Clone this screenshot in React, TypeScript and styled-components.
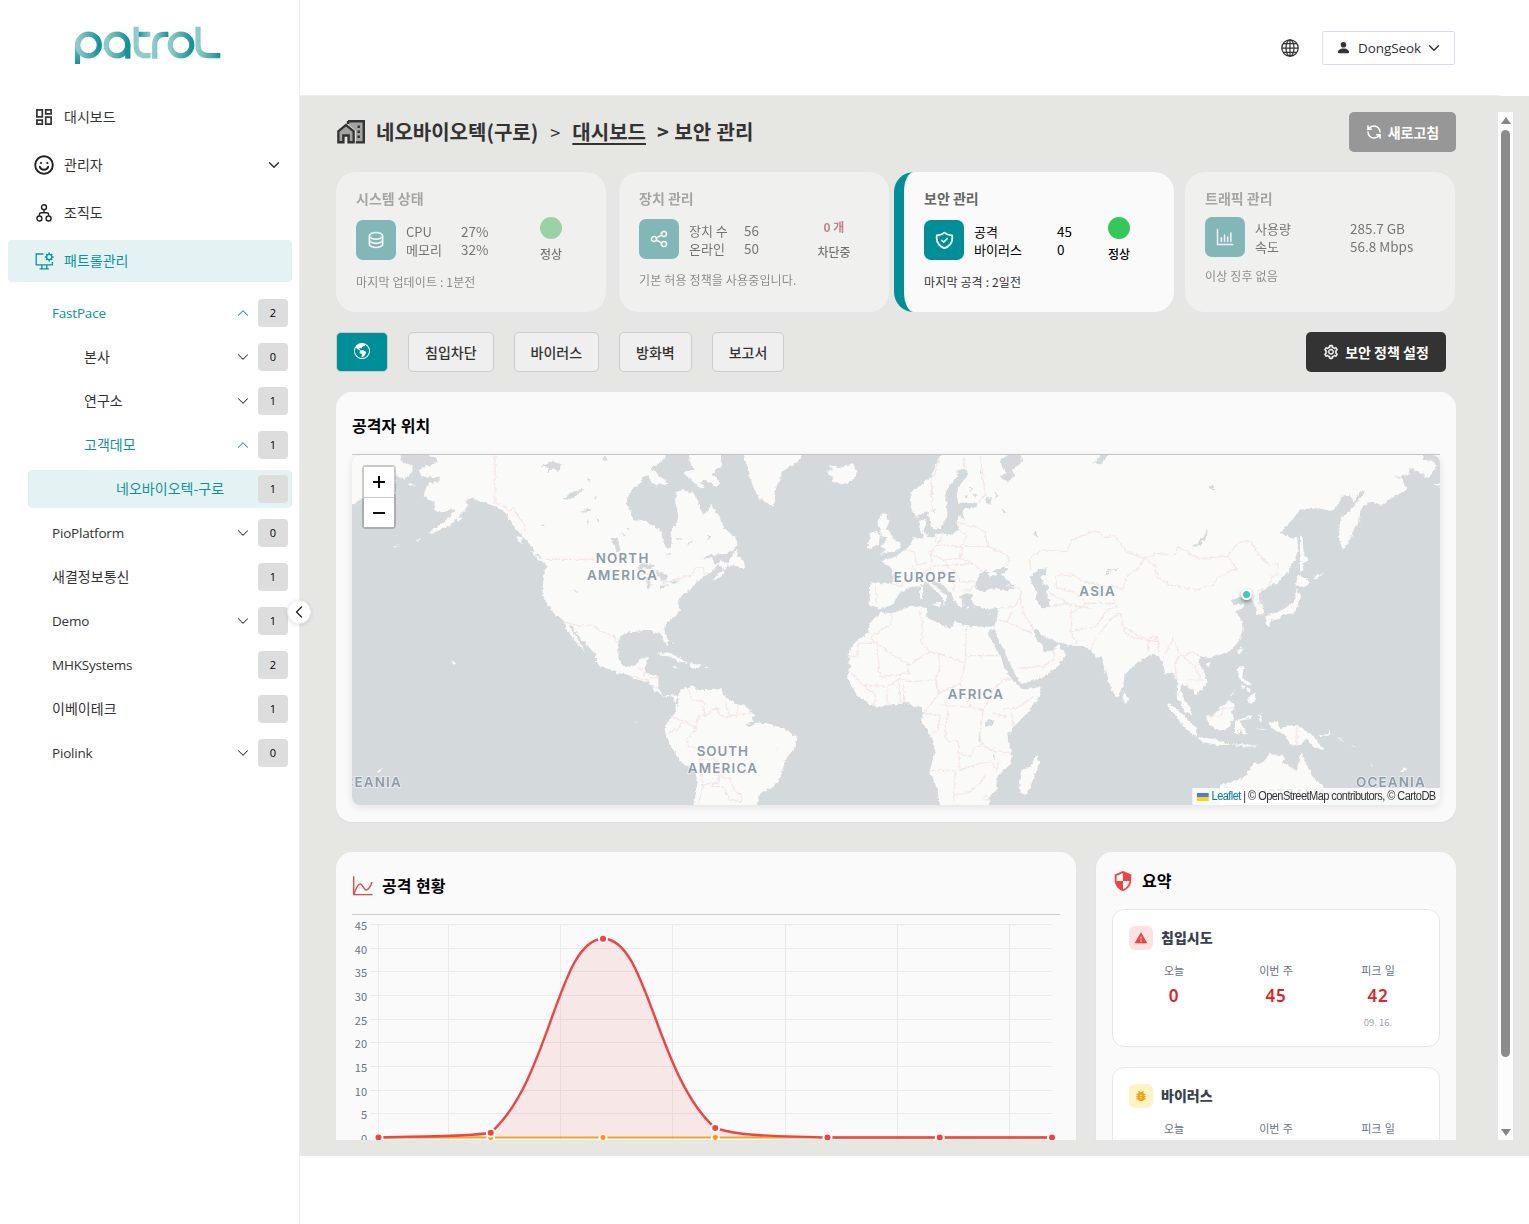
import React from "react";
import styled, { createGlobalStyle, css } from "styled-components";
import { MdSecurity, MdWarning, MdBugReport } from "react-icons/md";
import { BsPersonFill, BsGlobeAmericas } from "react-icons/bs";
import { AiOutlineSetting } from "react-icons/ai";
import { HiOutlineShieldCheck, HiOutlineDatabase, HiOutlineShare } from "react-icons/hi";
import { ChevronDown, ChevronUp, ChevronLeft, RefreshCcw } from "lucide-react";

const TEAL = "#008f98";
const KR = `"Noto Sans CJK KR", sans-serif`;
const UI = `"Open Sans", "Noto Sans CJK KR", sans-serif`;

const Global = createGlobalStyle`
  * { box-sizing: border-box; }
  body { margin: 0; background: #fff; font-family: ${KR}; color: #000; overflow: hidden; }
  button { font-family: inherit; }
`;

/* ---------- shell ---------- */
const Shell = styled.div`
  display: grid;
  grid-template-columns: 300px 1fr;
  width: 1529px;
  height: 1224px;
`;
const Sidebar = styled.aside`
  position: relative;
  border-right: 1px solid #ededed;
  background: #fff;
`;
const LogoBox = styled.div`
  height: 96px;
  padding: 25px 0 0 74px;
`;
const Menu = styled.nav`
  display: flex;
  flex-direction: column;
  gap: 6px;
  padding: 0 7px 0 8px;
`;
const MenuItem = styled.div<{ $active?: boolean }>`
  display: flex;
  align-items: center;
  height: 42px;
  padding: 0 9px 0 26px;
  border-radius: 4px;
  font-size: 14px;
  color: ${(p) => (p.$active ? "#0d929b" : "#333")};
  background: ${(p) => (p.$active ? "#e4f2f3" : "transparent")};
`;
const MenuIcon = styled.span`
  display: flex;
  width: 20px;
  margin-right: 10px;
  justify-content: center;
`;
const MenuText = styled.span`
  flex: 1;
  line-height: 20px;
  padding-bottom: 2px;
`;
const Tree = styled.div`
  display: flex;
  flex-direction: column;
  gap: 6px;
  padding: 12px 7px 0 28px;
`;
const TreeRow = styled.div<{ $depth: number; $on?: boolean; $selected?: boolean }>`
  display: flex;
  align-items: center;
  height: 38px;
  padding: 0 4px 0 ${(p) => 24 + p.$depth * 32}px;
  border-radius: 4px;
  color: ${(p) => (p.$on ? "#0d929b" : "#333")};
  background: ${(p) => (p.$selected ? "#e4f2f3" : "transparent")};
`;
const TreeName = styled.span<{ $latin?: boolean }>`
  flex: 1;
  line-height: 20px;
  padding-bottom: ${(p) => (p.$latin ? 0 : 2)}px;
  font-size: ${(p) => (p.$latin ? 13.5 : 14)}px;
  font-family: ${(p) => (p.$latin ? UI : KR)};
  letter-spacing: ${(p) => (p.$latin ? "-0.2px" : "0.03px")};
`;
const Count = styled.span`
  display: flex;
  align-items: center;
  justify-content: center;
  width: 30px;
  height: 28px;
  margin-left: 6px;
  border-radius: 4px;
  background: #ddd;
  color: #000;
  font: 500 11px/16px ${UI};
`;
const Collapse = styled.button`
  position: absolute;
  top: 600px;
  right: -12px;
  z-index: 2;
  display: flex;
  align-items: center;
  justify-content: center;
  width: 24px;
  height: 24px;
  padding: 0;
  border: 1px solid #eee;
  border-radius: 50%;
  background: #fff;
  color: #222;
  box-shadow: 0 1px 4px rgba(0, 0, 0, 0.12);
`;
const Right = styled.div`
  display: flex;
  flex-direction: column;
`;
const Header = styled.header`
  display: flex;
  align-items: center;
  justify-content: flex-end;
  gap: 23px;
  width: 1200px;
  height: 96px;
  padding-right: 45px;
  border-bottom: 1px solid #ededed;
`;
const UserBox = styled.button`
  display: flex;
  align-items: center;
  width: 133px;
  height: 34px;
  padding: 0 11px 0 13px;
  border: 1px solid #dcdce6;
  border-radius: 2px;
  background: #fff;
  color: #333;
  font: 13.5px/20px ${UI};
  span { flex: 1; text-align: left; padding-left: 7px; white-space: nowrap; letter-spacing: -0.1px; }
`;
const Main = styled.main`
  display: flex;
  justify-content: space-between;
  height: 1060px;
  padding: 16px 16px 16px 36px;
  background: #e6e7e2;
`;
const Scroll = styled.div`
  width: 1120px;
  height: 1028px;
  overflow: hidden;
`;
const Bar = styled.div`
  display: flex;
  flex-direction: column;
  align-items: center;
  justify-content: space-between;
  width: 15px;
  height: 1028px;
  padding: 5px 0 4px;
  background: #fcfcfc;
`;
const Thumb = styled.div`
  width: 9px;
  height: 927px;
  margin: 6px 0 auto;
  border-radius: 5px;
  background: #8b8b8b;
`;
const Arrow = styled.i<{ $down?: boolean }>`
  width: 0;
  height: 0;
  border: 5px solid transparent;
  ${(p) =>
    p.$down
      ? css`border-top: 7px solid #858585; border-bottom: 0;`
      : css`border-bottom: 7px solid #858585; border-top: 0;`}
`;

/* ---------- title and status cards ---------- */
const TitleRow = styled.div`
  display: flex;
  align-items: center;
  height: 40px;
  margin-bottom: 20px;
  color: #333;
  font-size: 20px;
  font-weight: 700;
  line-height: 28px;
  white-space: pre;
  word-spacing: 1px;
  > svg { margin-right: 10px; }
`;
const Sep = styled.span`
  width: 34px;
  text-align: center;
  font-size: 18px;
  font-weight: 400;
`;
const Crumb = styled.span`
  text-decoration: underline;
  text-underline-offset: 3px;
  text-decoration-thickness: 2px;
  margin-right: 11px;
`;
const SolidButton = styled.button<{ $bg: string; $w: number; $mr?: number }>`
  display: flex;
  align-items: center;
  justify-content: center;
  gap: 6px;
  width: ${(p) => p.$w}px;
  height: 40px;
  margin-left: auto;
  margin-right: ${(p) => p.$mr ?? 0}px;
  padding: 0;
  border: 0;
  border-radius: 5px;
  background: ${(p) => p.$bg};
  color: #fff;
  font-size: 14px;
  font-weight: 700;
  line-height: 20px;
`;
const Cards = styled.div`
  display: grid;
  grid-template-columns: repeat(4, 283px);
  margin-bottom: 20px;
`;
const StatCard = styled.section<{ $active?: boolean }>`
  width: 270px;
  height: 140px;
  padding: 16px 20px;
  border-radius: 20px;
  background: #fafafa;
  ${(p) =>
    p.$active
      ? css`
          width: 280px;
          margin-left: -8px;
          border-left: 10px solid ${TEAL};
        `
      : css`
          opacity: 0.5;
          filter: grayscale(30%);
        `}
`;
const StatTitle = styled.h3`
  margin: 0 0 9px;
  height: 20px;
  font-size: 14px;
  font-weight: 700;
  line-height: 20px;
  color: #666;
`;
const StatBody = styled.div<{ $h: number }>`
  display: flex;
  align-items: center;
  height: ${(p) => p.$h}px;
`;
const Tile = styled.div`
  display: flex;
  align-items: center;
  justify-content: center;
  width: 40px;
  height: 40px;
  margin-right: 10px;
  border-radius: 7px;
  background: ${TEAL};
  color: #fff;
`;
const Pairs = styled.dl<{ $col: number }>`
  display: grid;
  grid-template-columns: ${(p) => p.$col}px auto;
  margin: 0;
  padding-top: 1px;
  font-size: 13px;
  line-height: 17.5px;
  white-space: nowrap;
  dd, dt { margin: 0; }
  dd { font-size: 13.500px; }
`;
const State = styled.div`
  display: flex;
  flex-direction: column;
  align-items: center;
  justify-content: space-between;
  width: 70px;
  height: 100%;
  margin-left: auto;
  font-size: 12px;
  font-weight: 500;
  line-height: 18px;
`;
const Dot = styled.i`
  width: 22px;
  height: 22px;
  border-radius: 50%;
  background: #34c759;
`;
const Blocked = styled.b`
  color: #c8102e;
  line-height: 20px;
`;
const StatFoot = styled.p`
  margin: 9px 0 0;
  font-size: 12px;
  line-height: 20px;
  letter-spacing: 0.15px;
  color: #333;
`;

/* ---------- tabs ---------- */
const Tabs = styled.div`
  display: flex;
  gap: 20px;
  height: 40px;
  margin-bottom: 20px;
`;
const Tab = styled.button<{ $active?: boolean }>`
  height: 40px;
  padding: 0 16px;
  border: 1px solid #ccc;
  border-radius: 5px;
  background: ${(p) => (p.$active ? TEAL : "#efefef")};
  color: ${(p) => (p.$active ? "#fff" : "#333")};
  font-size: 14px;
  font-weight: 500;
  svg { display: block; margin: -2px 1px 0; }
`;

/* ---------- panels ---------- */
const Panel = styled.section<{ $w?: number }>`
  width: ${(p) => (p.$w ? `${p.$w}px` : "auto")};
  padding: 16px;
  border-radius: 16px;
  background: #fafafa;
  box-shadow: 0 1px 3px rgba(0, 0, 0, 0.03);
`;
const PanelTitle = styled.h2<{ $h: number; $line?: boolean }>`
  display: flex;
  align-items: center;
  gap: 8px;
  height: ${(p) => p.$h}px;
  margin: 0;
  padding-bottom: ${(p) => (p.$line ? 12 : 18)}px;
  border-bottom: ${(p) => (p.$line ? "1px solid #c9cacc" : "0")};
  font-size: 16px;
  font-weight: 700;
  word-spacing: 1px;
  svg { position: relative; top: 1px; }
`;
const MapFrame = styled.div`
  position: relative;
  width: 1088px;
  height: 350px;
  margin-bottom: 1px;
  border-radius: 8px;
  overflow: hidden;
  background: #d4dadc;
`;
const MapShadow = styled.div`
  border-radius: 8px;
  box-shadow: 0 2px 8px rgba(0, 0, 0, 0.1);
`;
const Zoom = styled.div`
  position: absolute;
  top: 10px;
  left: 10px;
  width: 34px;
  border: 2px solid rgba(0, 0, 0, 0.2);
  border-radius: 4px;
  background-clip: padding-box;
  span {
    display: flex;
    align-items: center;
    justify-content: center;
    height: 30px;
    background: #fff;
  }
  span + span { border-top: 1px solid #ccc; }
`;
const Marker = styled.i`
  position: absolute;
  left: 889px;
  top: 134px;
  width: 11px;
  height: 11px;
  border: 2px solid #fff;
  border-radius: 50%;
  background: #3fc8c4;
  box-shadow: 0 2px 4px rgba(0, 0, 0, 0.4);
`;
const Credit = styled.div`
  position: absolute;
  right: 0;
  bottom: 0;
  display: flex;
  align-items: center;
  height: 17px;
  padding: 0 5px;
  background: rgba(255, 255, 255, 0.8);
  font: 12px/17px "Liberation Sans Narrow", "Liberation Sans", sans-serif;
  color: #333;
  white-space: pre;
  letter-spacing: -0.62px;
  transform: scaleX(0.921);
  transform-origin: right;
  a { color: #0078a8; }
  svg { margin-right: 3px; }
`;
const Lower = styled.div`
  display: flex;
  gap: 20px;
  margin-top: 30px;
`;
const Summary = styled.article`
  height: 138px;
  margin-bottom: 20px;
  padding: 16px;
  border: 1px solid #e5e7eb;
  border-radius: 12px;
  background: #fff;
`;
const SummaryHead = styled.div`
  display: flex;
  align-items: center;
  gap: 8px;
  height: 24px;
  margin-bottom: 11px;
  font-size: 14px;
  font-weight: 700;
  color: #374151;
  > b { padding-bottom: 2px; line-height: 20px; }
`;
const Chip = styled.span<{ $bg: string; $fg: string }>`
  display: flex;
  align-items: center;
  justify-content: center;
  width: 24px;
  height: 24px;
  border-radius: 6px;
  background: ${(p) => p.$bg};
  color: ${(p) => p.$fg};
`;
const Figures = styled.div`
  display: grid;
  grid-template-columns: repeat(3, 90px);
  gap: 12px;
  text-align: center;
`;
const FigLabel = styled.div`
  font-size: 11px;
  line-height: 18px;
  word-spacing: 0.8px;
  color: #6b7280;
`;
const FigValue = styled.div`
  margin-top: 5px;
  font: 600 17px/24px "Noto Sans", sans-serif;
  letter-spacing: 0.7px;
  color: #dc2626;
`;
const FigDate = styled.div`
  margin-top: 6px;
  font-size: 9.5px;
  line-height: 16px;
  color: #9ca3af;
`;

/* ---------- drawings ---------- */
const Logo = () => (
  <svg width="147" height="40" viewBox="224 75 441 120" fill="none" strokeWidth="15.500">
    <defs>
      <linearGradient id="lg" x1="0" x2="1"><stop offset="0" stopColor="#8fcbc9" /><stop offset="1" stopColor="#16919a" /></linearGradient>
      <linearGradient id="ld" gradientUnits="userSpaceOnUse" x1="453" x2="416" y1="0" y2="0"><stop offset="0" stopColor="#8fcbc9" /><stop offset="1" stopColor="#16919a" /></linearGradient>
      <linearGradient id="lv" x1="0" x2="0" y1="0" y2="1"><stop offset="0" stopColor="#8fcbc9" /><stop offset="1" stopColor="#16919a" /></linearGradient>
    </defs>
    <path d="M234.500 192V135q0-8 4-16" stroke="url(#lv)" />
    <circle cx="267.500" cy="135" r="32.500" stroke="url(#lg)" />
    <circle cx="353" cy="135" r="32.500" stroke="url(#lg)" />
    <path d="M385.500 130v46" stroke="#16919a" />
    <path d="M410.500 80v57q0 30 30 30h13" stroke="#8fcbc9" />
    <path d="M418 103h35" stroke="url(#ld)" />
    <path d="M466 176v-41q0-32 30-32h11" stroke="url(#lg)" />
    <path d="M450 160h26" stroke="#8fcbc9" strokeWidth="2" />
    <circle cx="545" cy="135" r="32.500" stroke="url(#lg)" />
    <path d="M596 80v55q0 32 32 32h35" stroke="url(#lg)" />
  </svg>
);

const DashIcon = () => (
  <svg width="16" height="16" viewBox="0 0 16 16" fill="none" stroke="currentColor" strokeWidth="1.700">
    <path d="M.9.900h5.400v7H.9zM9.700.900h5.400v3.900H9.700zM.9 11.200h5.400v3.900H.9zM9.700 8.100h5.400v7H9.700z" />
  </svg>
);
const SmileIcon = () => (
  <svg width="20" height="20" viewBox="0 0 20 20" fill="none" stroke="#222" strokeWidth="1.900" strokeLinecap="round">
    <circle cx="10" cy="10" r="8.800" />
    <path d="M5.800 11.700a4.400 4.400 0 0 0 8.400 0" />
    <circle cx="6.800" cy="8" r=".6" fill="currentColor" strokeWidth="1" />
    <circle cx="13.200" cy="8" r=".6" fill="currentColor" strokeWidth="1" />
  </svg>
);
const OrgIcon = () => (
  <svg width="16" height="18" viewBox="0 0 16 18" fill="none" stroke="#222" strokeWidth="1.400">
    <circle cx="8" cy="3.300" r="2.500" />
    <circle cx="3.400" cy="14.500" r="2.500" />
    <circle cx="12.600" cy="14.500" r="2.500" />
    <path d="M8 6v2.700M3.400 11.800V10.500q0-1.800 1.800-1.800h5.600q1.800 0 1.800 1.800v1.300" />
  </svg>
);
const PatrolIcon = () => (
  <svg width="19" height="18" viewBox="0 0 19 18" fill="none" stroke="currentColor" strokeWidth="1.300">
    <path d="M8.500 2H1.200v10.800h16.200V10M6.800 13v3.800M11.800 13v3.800M4.500 16.900h9.500" />
    <circle cx="14.200" cy="5" r="2.600" />
    <path d="M14.200.600v1.800M14.200 7.600v1.800M9.900 5h1.700M16.800 5h1.800M11.200 2l1.200 1.200M16 6.800l1.200 1.200M17.200 2L16 3.200M12.400 6.800L11.200 8" strokeWidth="1.600" />
  </svg>
);
const WorldIcon = () => (
  <svg width="18" height="18" viewBox="0 0 18 18" fill="none" stroke="#333" strokeWidth="1.250">
    <circle cx="9" cy="9" r="8.200" />
    <ellipse cx="9" cy="9" rx="4" ry="8.200" />
    <path d="M9 .8v16.400M.8 9h16.400M2.200 4.700h13.600M2.200 13.300h13.600" />
  </svg>
);
const HomeWorkIcon = () => (
  <svg width="30" height="26" viewBox="0 0 30 26">
    <path d="M13 3h14v20h-7V12l-7-6z" fill="#a2a3a2" />
    <path d="M3.500 13L10 7.500l6.500 5.500v10H13v-7H7v7H3.500z" fill="#a2a3a2" />
    <path d="M12 2.200h15.800v21.200h-8M12 2v3" fill="none" stroke="#333" strokeWidth="2.400" />
    <path d="M2.400 23.300V12.200L10 6l7.600 6.200v11.100h-5V16.500H7.400v6.800z" fill="none" stroke="#333" strokeWidth="2.400" />
    <path d="M21.500 6.500h2.400v2.400h-2.400zM21.500 11.500h2.400v2.400h-2.400zM21.500 16.500h2.400v2.400h-2.400z" fill="#333" />
  </svg>
);
const BarsIcon = () => (
  <svg width="18" height="18" viewBox="0 0 18 18" fill="none" stroke="currentColor" strokeWidth="1.500" strokeLinecap="round">
    <path d="M1.500 1.500v15h15.300M5.300 13.500v-3.800M8.500 13.500V7M11.700 13.500V9M14.900 13.500V5" />
  </svg>
);
const GraphIcon = () => (
  <svg width="22" height="20" viewBox="0 0 22 20" fill="none" stroke="#ef4444" strokeWidth="1.400">
    <path d="M1.700.300v18.300h19" />
    <path d="M1.900 18.300c2-6 4-10.300 6.400-10.300s3.200 6 5.800 6 4.300-3.500 6-8" />
  </svg>
);

const LAND = [
  /* Chukotka, west edge */
  "M0 0H145L155 35 185 45 188 65 160 90 137 75 137 130 38 145 20 155 15 166 0 158Z",
  "M172 103l12-4 14 8-10 2z",
  /* North and Central America */
  "M235 0L240 20 262 22 262 40 230 48 205 62 215 78 240 82 268 80 265 95 240 100 228 112 222 137 235 150 255 155 252 180 270 187 290 180 315 178 300 200 280 217 260 232 232 252 248 250 270 240 300 224 325 200 345 180 355 165 345 152 370 142 378 152 395 155 415 162 440 170 455 180 470 192 480 212 490 228 500 240 515 252 525 267 540 280 548 300 560 318 575 328 592 350 583 362 580 390 577 432 588 455 600 475 612 492 637 507 645 522 650 540 665 562 684 582 704 606 690 578 675 555 660 535 658 525 668 528 675 545 690 560 705 580 722 597 738 612 738 635 755 650 780 660 805 670 830 673 850 685 875 692 895 695 905 710 915 725 935 735 950 745 960 735 970 740 975 757 985 770 985 745 970 733 955 735 945 740 930 725 925 705 925 680 905 675 885 670 885 650 893 632 897 622 870 625 862 643 840 650 820 645 806 625 805 600 806 570 820 550 835 546 860 546 880 540 900 540 915 548 932 545 935 560 945 580 952 587 955 575 945 550 943 530 955 515 975 500 990 480 982 465 988 448 1000 430 1020 420 1035 405 1040 392 1065 378 1085 365 1098 350 1110 330 1140 345 1120 360 1095 382 1085 392 1110 380 1125 365 1118 352 1095 340 1085 325 1060 325 1040 345 1068 317 1100 313 1130 312 1155 296 1162 282 1160 266 1140 250 1120 230 1110 205 1095 182 1084 162 1075 180 1065 192 1050 180 1045 155 1030 130 1000 120 980 125 975 150 985 195 980 222 962 240 965 280 957 297 940 280 935 250 930 240 900 222 880 210 850 212 845 190 830 165 832 140 845 120 865 105 880 82 895 75 900 90 920 110 930 100 955 105 945 90 925 75 910 55 925 40 945 25 950 0Z",
  "M1015 0H1112L1115 45 1095 60 1085 75 1110 95 1100 110 1070 90 1050 95 1068 120 1040 108 1020 85 1000 72 1012 60 1035 60 1020 40Z",
  /* Newfoundland */
  "M1160 297L1142 325 1128 345 1160 348 1175 355 1186 350 1180 330 1162 318Z",
  /* Vancouver Island and Haida Gwaii */
  "M543 302l22 12 20 25-18-8zM500 258l14 6 4 22-12-12zM320 205l20-5-16 14z",
  /* Caribbean */
  "M918 612L950 607 985 622 1015 640 990 636 960 620ZM1018 640L1050 645 1055 650 1025 656ZM970 650l16 3-14 3zM1064 650l14 2-12 3zM965 574l8 8-2 4z",
  /* South America */
  "M978 755L990 722 1030 705 1040 720 1075 720 1115 718 1120 735 1150 758 1185 765 1212 795 1205 815 1260 822 1300 835 1342 862 1337 890 1305 930 1295 975 1270 1010 1225 1035 1222 1075H1030L1042 1000 1035 960 990 935 965 890 945 850 950 820 975 790Z",
  /* Greenland and Iceland */
  "M1178 0L1192 50 1198 80 1210 110 1225 140 1240 152 1260 165 1268 166 1275 140 1275 115 1290 90 1295 65 1320 50 1345 35 1360 0Z",
  "M1432 62L1450 58 1435 45 1455 50 1465 55 1480 48 1510 42 1522 65 1515 85 1480 105 1460 97 1445 95 1450 80 1435 75Z",
  /* Britain and Ireland */
  "M1582 215L1597 190 1612 193 1605 208 1622 210 1610 232 1625 255 1635 270 1652 278 1648 298 1625 305 1600 311 1590 314 1608 298 1595 290 1605 272 1608 262 1592 258 1590 235Z",
  "M1560 252L1580 242 1590 258 1585 285 1555 295 1552 280 1562 268Z",
  /* Eurasia */
  "M1775 0L1772 20 1760 40 1745 78 1720 100 1682 127 1682 150 1685 182 1700 200 1720 190 1732 180 1735 200 1748 236 1775 235 1780 215 1792 200 1790 160 1785 130 1800 105 1822 80 1822 62 1838 56 1852 64 1850 80 1825 110 1820 140 1825 158 1882 160 1878 172 1840 177 1838 192 1845 212 1830 196 1820 215 1825 240 1800 255 1770 250 1740 262 1715 255 1708 230 1712 210 1730 208 1725 230 1720 245 1735 256 1715 265 1690 265 1680 285 1660 305 1640 318 1625 325 1598 330 1600 340 1628 355 1632 385 1625 402 1562 397 1560 420 1558 467 1590 477 1625 465 1635 453 1640 437 1665 420 1685 410 1710 408 1728 396 1745 410 1770 433 1782 450 1778 470 1792 440 1775 422 1748 402 1742 386 1780 405 1802 430 1815 452 1830 475 1842 468 1830 440 1850 430 1868 432 1862 450 1880 470 1910 478 1945 474 1942 500 1932 530 1945 570 1962 600 1985 652 2005 690 2015 702 2080 682 2120 652 2148 616 2125 582 2110 600 2082 607 2078 585 2060 570 2050 540 2066 540 2080 560 2120 576 2155 587 2205 588 2225 605 2240 625 2255 618 2260 640 2270 680 2290 728 2303 741 2320 712 2323 675 2360 640 2380 625 2415 612 2425 620 2440 640 2445 670 2470 668 2482 700 2480 738 2490 755 2505 785 2527 797 2520 775 2505 752 2490 722 2495 700 2510 708 2530 720 2535 735 2555 720 2570 700 2565 670 2545 640 2550 618 2580 625 2600 617 2640 602 2665 575 2678 540 2675 510 2657 485 2685 468 2680 460 2655 465 2643 455 2675 437 2695 435 2708 450 2715 470 2720 495 2742 490 2740 465 2722 448 2735 425 2760 405 2780 402 2810 370 2835 330 2844 300 2842 265 2820 262 2792 248 2830 205 2855 178 2910 175 2940 186 2960 170 2980 135 3000 135 3010 158 3030 125 3045 122 3020 158 3000 182 2972 205 2968 235 2968 270 2978 300 2995 280 3010 242 3028 215 3030 185 3042 165 3065 155 3095 165 3130 140 3170 120 3160 85 3130 82 3175 75 3180 50 3210 70 3235 85 3260 50 3250 32 3222 30 3215 0Z",
  "M1850 470l25 3-25 2zM1914 492l18-4-14 6zM1710 408l8 4-2 35-6-2zM1745 462l28-4-4 14z",
  "M3245 102l30 0v8z",
  /* Africa */
  "M1590 487L1625 490 1680 470 1728 470 1732 502 1800 537 1815 515 1860 530 1932 530 1915 547 1930 582 1955 627 1962 652 1980 682 2010 712 2015 720 2075 710 2070 737 2040 780 1985 837 1970 860 1985 905 1985 940 1940 980 1940 1020 1918 1040 1915 1075H1772L1760 1010 1738 965 1755 910 1750 870 1715 815 1720 790 1715 770 1685 770 1675 756 1640 762 1575 772 1520 735 1492 685 1500 650 1495 610 1520 570 1555 550 1560 520Z",
  "M2060 915L2068 940 2045 1000 2030 1035 2012 1030 2008 1000 2018 960 2040 950Z",
  /* Sri Lanka, Japan, Sakhalin, Taiwan, Hainan */
  "M2320 725L2337 745 2330 758 2318 752Z",
  "M2850 256L2858 262 2860 300 2872 332 2858 340 2860 362 2850 362 2850 320Z",
  "M2845 374L2862 385 2880 398 2860 412 2845 405 2835 412Z",
  "M2840 415L2850 440 2842 470 2830 490 2800 496 2760 512 2745 505 2755 495 2780 487 2812 472 2835 450Z",
  "M2750 506L2765 512 2755 530 2748 522ZM2772 502l20-3-10 10z",
  "M2676 588L2678 600 2668 617 2662 605ZM2565 640L2585 635 2575 652Z",
  "M2885 385l40-22-30 25z",
  /* Southeast Asia */
  "M2663 650L2682 648 2676 685 2705 702 2690 706 2665 682ZM2695 742L2715 728 2717 755 2700 758 2690 748ZM2690 712l14 4-6 14zM2675 705l10 6-6 8zM2640 738l18-22-14 22z",
  "M2568 797L2590 795 2620 765 2635 753 2655 765 2643 785 2650 805 2630 840 2600 838 2575 820Z",
  "M2450 762L2480 775 2510 805 2540 835 2540 860 2505 835 2480 800Z",
  "M2540 862L2600 868 2640 885 2600 885 2560 877ZM2650 882l55 2-10 6-45-4zM2695 895l28-14-16 12z",
  "M2655 812L2680 803 2710 795 2700 806 2670 812 2675 825 2690 850 2680 856 2668 835 2665 856 2655 850Z",
  "M2728 795l8-6-2 26-6-4zM2720 835l34 4-20 2z",
  "M2755 820L2780 815 2790 835 2805 830 2842 825 2880 850 2905 875 2922 900 2895 895 2870 868 2845 887 2820 882 2800 850 2770 840Z",
  "M2905 858l30-6 8-14-4 18-28 6zM2960 860l20 12-4 3zM3002 880l20 20-12-10zM3060 938l10 12-6-2z",
  "M2610 1005L2680 985 2710 942 2740 935 2760 912 2805 917 2798 935 2840 963 2853 903 2870 945 2890 985 2920 1010 2930 1075H2610Z",
  "M3150 965l14-12 10 0-14 14zM80 965l22-14-14 18zM304 636l8-2 2 8-8 2zM288 622l6 2zM128 290l22-6-18 9zM196 272l22-12-14 12zM858 812l4 4-3 3z",
];
const WATER = [
  /* Great Lakes and Canadian lakes */
  "M857 358L880 340 912 345 905 358 880 355ZM888 385L898 380 902 408 892 418ZM915 362L940 368 955 378 940 395 925 385ZM928 410l34-10-30 18zM960 398l30-10-16 14z",
  "M780 265L800 262 812 300 800 305ZM640 148L665 125 705 118 680 135 660 150ZM570 50L610 32 635 40 625 68 612 55 590 68 600 52ZM688 190l20-15 22 5-26 6zM740 205l8 4-4 12zM672 418l8 6-1 6z",
  "M900 60l12-14 4 14zM760 30l6-14 6 16zM712 85l8 4-4 8zM735 135l6 6-5 6zM712 208l6 8-6 10zM820 250l6 6-6 6zM574 222l10 8-8 2z",
  "M975 265l24 0-10 6zM1012 282l12-8-4 10zM950 308l14 6-10 2zM1068 258l16 4-8 6zM830 232l8 4-6 4z",
  /* Black, Caspian, Azov, Red Sea */
  "M1877 420L1877 395 1892 368 1910 362 1918 380 1940 376 1930 362 1955 352 1975 355 1955 375 1990 405 1995 418 1960 422 1925 415 1900 425Z",
  "M2042 380L2065 358 2090 355 2088 372 2070 378 2078 400 2095 410 2090 430 2098 450 2098 470 2075 472 2055 450 2062 430 2052 412 2042 400Z",
  "M1952 30L1975 15 2005 10 2020 35 1985 60 1995 75 1975 95 1950 80 1970 68 1955 50Z",
  "M1908 140l16 4-2 20-14-6zM1934 120l10 14-6 12zM1955 175l12 12-6 8z",
  "M1745 182l12-6-2 14zM1860 110l8 8-6 6zM1872 128l8 8-6 8zM1848 130l6 8-6 6zM1890 60l6 8-6 6z",
  "M2052 245l28-10-22 8 6 24-10-10z",
  /* Africa's lakes, Baikal, Balkhash and others */
  "M1908 812L1930 808 1925 828 1908 830ZM1888 845l5 30-8-6zM1930 890l5 40-6-8z",
  "M2524 292L2550 285 2570 262 2574 235 2565 250 2548 275 2530 288ZM2265 375L2275 358 2315 357 2280 362 2270 376ZM2228 38L2250 42 2278 15 2250 15 2240 34ZM2572 112l16-8 8 16-14-4z",
  "M1186 822l36-6-20 14-14-4zM1272 905l18-16-8 8z",
];
const BORDERS =
  "M435 0V160L460 165 478 185 490 170 505 200 528 230 526 245 M590 328H735 M880 370L925 380 940 400 985 385 1025 375 1040 350 1060 352 1063 375 M640 515L690 528 725 525 760 548 785 555 805 580 M860 655H885L880 685 M850 678L880 690 925 682 M905 710H925 M1015 715L1025 750 1060 755 1065 800 1090 780 1110 775 M960 798L1010 818 1038 835 1045 800 1065 795 M950 850L985 835 1000 812 M1040 835L1010 870 1015 890 1040 895 M1048 920L1055 960 1058 1005 1080 1000 1105 1000 1110 970 1095 930 1050 925 M1058 1005L1045 1065 M1085 1010L1110 980 1140 985 1150 1020 1180 1040 1170 1055 1140 1050 1120 1010 1085 1010 M1085 775L1100 775 1110 795 1130 800 1200 790 1205 775 M1125 760L1140 800 M1165 765L1160 795" +
  "M1770 15L1762 50 1745 100 1745 180 M1840 15L1845 55 M1890 15L1905 130 1885 160 M1825 240L1850 255 1838 290 1760 285 1758 260 M1845 225L1875 230 1900 240 1910 270 1915 290 1845 290 M1838 290L1830 325 1870 340 1895 365 M1915 290L1970 315 1980 330 1965 350 M1760 285L1740 310 1780 330 1830 325 M1740 310L1745 335 1700 345 1690 305 1660 300 M1690 345L1695 370 1720 370 1745 350 1800 345 1870 342 M1780 330L1800 355 1820 370 1830 395 1875 395 M1775 360L1800 380 1815 405 1810 425 M1835 420L1865 420 1868 405 M1625 402L1662 410 M1575 410L1582 440 1578 465 M1815 215L1845 222 M1780 250L1762 285" +
  "M1627 490L1625 520 1565 560 1565 580 1525 580 1520 620 1495 622 M1565 570L1675 645 1740 605 1715 580 1718 520 1708 480 M1675 645V670L1590 680 1582 590 M1740 605L1765 610 1845 640 1850 530 M1850 617H1952 M1765 610L1770 650 1755 690 1680 695 1650 685 1610 710 1540 705 1500 665 M1845 640L1840 670 1830 700 1765 730 1755 690 M1540 705L1575 735 1575 770 M1610 710L1612 765 M1645 690L1652 760 M1660 700L1665 758 M1755 690L1770 730 1740 765 1720 790 1770 795 1765 840 1745 850 M1830 700L1860 770 1900 780 1930 720 1960 690 1985 685 M1770 765L1835 770 1860 770 M1795 780L1785 840 1790 870 1825 875 1830 960 1740 962 M1900 780L1895 815 1890 860 1900 885 1870 895 1865 920 1830 910 M1900 885L1930 905 1985 908 M1830 960L1890 940 1925 935 1940 960 1945 935 M1815 965L1810 1060 M1810 1035L1850 1030 1890 1000 1910 970 M1900 1040l12-4 4 10-10 6z M1960 775H2000L2050 740 M1990 830L1985 790 M1970 800L1930 790" +
  "M1945 474L1995 470 2010 440 2015 420 1970 405 M1945 510L1970 515 1990 480 M1970 515L2045 550 2048 530 2020 490 2010 440 M2000 655L2080 650 2115 625 2110 600 M2042 360L2038 325 2080 300 2150 305 2165 270 2235 242 2265 262 2290 255 2330 305 2382 325 2370 350 2330 380 2320 415 2280 410 2200 395 2170 375 2118 378 M2118 378L2115 410 2180 430 2220 475 2150 460 2095 425 M2098 470L2160 460 2165 520 2162 545 2180 580 M2165 490L2210 460 2300 460 M2162 545L2240 530 2270 480 2300 470 2290 440 M2220 600L2240 560 2280 510 2310 490 2320 530 2400 575 2425 560 M2382 325L2415 345 2420 380 2460 405 2535 418 2590 405 2600 385 2660 355 2630 320 2545 325 2485 290 2475 315 2420 310 2382 325 M2630 320L2665 280 2700 270 2725 315 2760 345 2785 340 2780 375 2765 380 2755 410 2720 425 M2320 540L2340 560 2390 570 2425 575 2420 560 2395 565 2395 610 M2425 570L2425 610 M2440 620L2470 565 2480 590 2485 620 2475 640 2480 690 M2485 620L2530 605 2550 618 M2500 620L2535 650 2555 690 2515 690 M2510 700L2520 720 M2722 460l18-6 M2570 800L2610 798 2622 772 2655 775 M2841 832V885";
const LABELS: [string, number, number, number][] = [
  ["NORTH", 737, 338, 158], ["AMERICA", 711, 389, 210], ["SOUTH", 1040, 918, 154], ["AMERICA", 1013, 969, 208],
  ["EUROPE", 1631, 395, 186], ["AFRICA", 1793, 747, 166], ["ASIA", 2188, 437, 106],
  ["OCEANIA", 3018, 1012, 206], ["OCEANIA", -54, 1012, 206], ["AUSTRALIA", 2690, 1046, 240],
];
const WorldMap = () => (
  <svg width="1088" height="350" viewBox="6 15 3264 1050" preserveAspectRatio="none">
    <defs>
      <filter id="coast" x="0" y="0" width="3280" height="1080" filterUnits="userSpaceOnUse">
        <feTurbulence type="fractalNoise" baseFrequency=".09" numOctaves="3" seed="4" />
        <feDisplacementMap in="SourceGraphic" scale="13" xChannelSelector="R" yChannelSelector="G" />
      </filter>
    </defs>
    <g filter="url(#coast)">
      <path d={LAND.join("")} fill="#fafaf8" />
      <path d={WATER.join("")} fill="#d4dadc" />
      <path d={BORDERS} fill="none" stroke="#f4e6e7" strokeWidth="3.600" strokeLinejoin="round" />
    </g>
    {LABELS.map(([t, x, y, w], i) => (
      <text key={i} x={x} y={y} textLength={w} fill="#8c9ba7" fontFamily="Inter, Lato" fontWeight="600" fontSize="40" stroke="#fafaf8" strokeWidth="5" strokeOpacity=".7" paintOrder="stroke">
        {t}
      </text>
    ))}
  </svg>
);

const X0 = 26.5, STEP = 112.25, Y0 = 222.5, UNIT = 213 / 45;
const attacks = [0, 1, 42, 2, 0, 0, 0];
const pts = attacks.map((v, i) => ({ x: X0 + i * STEP, y: Y0 - v * UNIT }));
const clampY = (y: number) => Math.min(Y0, Math.max(9.5, y));
const controls = pts.map((p, i) => {
  const a = pts[Math.max(0, i - 1)], b = pts[Math.min(pts.length - 1, i + 1)];
  const d0 = Math.hypot(p.x - a.x, p.y - a.y), d1 = Math.hypot(b.x - p.x, b.y - p.y);
  const f0 = (0.4 * d0) / (d0 + d1), f1 = (0.4 * d1) / (d0 + d1);
  return {
    in: `${p.x - f0 * (b.x - a.x)} ${clampY(p.y - f0 * (b.y - a.y))}`,
    out: `${p.x + f1 * (b.x - a.x)} ${clampY(p.y + f1 * (b.y - a.y))}`,
  };
});
const curve = pts.map((p, i) => (i ? `C${controls[i - 1].out} ${controls[i].in} ${p.x} ${p.y}` : `M${p.x} ${p.y}`)).join("");

const AttackChart = () => (
  <svg width="708" height="260" viewBox="0 0 708 260">
    {Array.from({ length: 10 }, (_, i) => {
      const y = Math.round(Y0 - i * 5 * UNIT - 0.5) + 0.5;
      return (
        <g key={i}>
          <path d={`M18 ${y}H700`} stroke="#ebebeb" />
          <text x="15" y={y + 5} textAnchor="end" fontFamily="Noto Sans CJK KR" fontSize="11" fill="#6b7280">{i * 5}</text>
        </g>
      );
    })}
    <path d="M26.500 9.500V231M96.500 9.500V231M208.500 9.500V231M320.500 9.500V231M433.500 9.500V231M545.500 9.500V231M657.500 9.500V231" stroke="#ebebeb" />
    <path d={`M${X0} ${Y0}H700`} stroke="#f59e0b" strokeWidth="2" strokeOpacity=".85" />
    {pts.map((p, i) => <circle key={i} cx={p.x} cy={Y0} r="3.500" fill="#f59e0b" stroke="#fff" strokeWidth="2" />)}
    <path d={`${curve}V${Y0}H${X0}Z`} fill="rgba(239,68,68,.1)" />
    <path d={curve} fill="none" stroke="#ef4444" strokeWidth="2.400" />
    {pts.map((p, i) => <circle key={i} cx={p.x} cy={p.y} r="4" fill="#ef4444" stroke="#fff" strokeWidth="2" />)}
  </svg>
);

/* ---------- data ---------- */
type Node = { name: string; depth: number; count: number; arrow?: "up" | "down"; on?: boolean; selected?: boolean };
const nodes: Node[] = [
  { name: "FastPace", depth: 0, count: 2, arrow: "up", on: true },
  { name: "본사", depth: 1, count: 0, arrow: "down" },
  { name: "연구소", depth: 1, count: 1, arrow: "down" },
  { name: "고객데모", depth: 1, count: 1, arrow: "up", on: true },
  { name: "네오바이오텍-구로", depth: 2, count: 1, on: true, selected: true },
  { name: "PioPlatform", depth: 0, count: 0, arrow: "down" },
  { name: "새결정보통신", depth: 0, count: 1 },
  { name: "Demo", depth: 0, count: 1, arrow: "down" },
  { name: "MHKSystems", depth: 0, count: 2 },
  { name: "이베이테크", depth: 0, count: 1 },
  { name: "Piolink", depth: 0, count: 0, arrow: "down" },
];

type Stat = {
  title: string; icon: React.ReactNode; h: number; col: number; rows: [string, string][];
  foot: string; active?: boolean; state?: React.ReactNode;
};
const ok = <><Dot /><span>정상</span></>;
const stats: Stat[] = [
  { title: "시스템 상태", icon: <HiOutlineDatabase size={20} />, h: 46, col: 55, rows: [["CPU", "27%"], ["메모리", "32%"]], foot: "마지막 업데이트 : 1분전", state: ok },
  { title: "장치 관리", icon: <HiOutlineShare size={20} />, h: 44, col: 55, rows: [["장치 수", "56"], ["온라인", "50"]], foot: "기본 허용 정책을 사용중입니다.", state: <><Blocked>0 개</Blocked><span>차단중</span></> },
  { title: "보안 관리", icon: <HiOutlineShieldCheck size={21} />, h: 46, col: 83, rows: [["공격", "45"], ["바이러스", "0"]], foot: "마지막 공격 : 2일전", state: ok, active: true },
  { title: "트래픽 관리", icon: <BarsIcon />, h: 40, col: 95, rows: [["사용량", "285.7 GB"], ["속도", "56.8 Mbps"]], foot: "이상 징후 없음" },
];

const SummaryCard = ({ title, chip, values, date }: { title: string; chip: React.ReactNode; values: string[]; date: string }) => (
  <Summary>
    <SummaryHead>{chip}<b>{title}</b></SummaryHead>
    <Figures>
      {["오늘", "이번 주", "피크 일"].map((label, i) => (
        <div key={label}>
          <FigLabel>{label}</FigLabel>
          <FigValue>{values[i]}</FigValue>
          {i === 2 && <FigDate>{date}</FigDate>}
        </div>
      ))}
    </Figures>
  </Summary>
);

export default function App() {
  return (
    <>
      <Global />
      <Shell>
        <Sidebar>
          <LogoBox><Logo /></LogoBox>
          <Menu>
            <MenuItem><MenuIcon><DashIcon /></MenuIcon><MenuText>대시보드</MenuText></MenuItem>
            <MenuItem><MenuIcon><SmileIcon /></MenuIcon><MenuText>관리자</MenuText><ChevronDown size={18} strokeWidth={1.9} /></MenuItem>
            <MenuItem><MenuIcon><OrgIcon /></MenuIcon><MenuText>조직도</MenuText></MenuItem>
            <MenuItem $active><MenuIcon><PatrolIcon /></MenuIcon><MenuText>패트롤관리</MenuText></MenuItem>
          </Menu>
          <Tree>
            {nodes.map((n) => (
              <TreeRow key={n.name} $depth={n.depth} $on={n.on} $selected={n.selected}>
                <TreeName $latin={/^[A-Z]/.test(n.name)}>{n.name}</TreeName>
                {n.arrow === "up" && <ChevronUp size={18} strokeWidth={1.4} />}
                {n.arrow === "down" && <ChevronDown size={18} strokeWidth={1.4} />}
                <Count>{n.count}</Count>
              </TreeRow>
            ))}
          </Tree>
          <Collapse><ChevronLeft size={20} strokeWidth={1.6} /></Collapse>
        </Sidebar>
        <Right>
          <Header>
            <WorldIcon />
            <UserBox><BsPersonFill size={15} /><span>DongSeok</span><ChevronDown size={18} strokeWidth={2} /></UserBox>
          </Header>
          <Main>
            <Scroll>
              <TitleRow>
                <HomeWorkIcon />
                네오바이오텍(구로)
                <Sep>&gt;</Sep>
                <Crumb>대시보드</Crumb>
                &gt; 보안 관리
                <SolidButton $bg="#979797" $w={107}><RefreshCcw size={16} strokeWidth={2.3} />새로고침</SolidButton>
              </TitleRow>
              <Cards>
                {stats.map((s) => (
                  <StatCard key={s.title} $active={s.active}>
                    <StatTitle>{s.title}</StatTitle>
                    <StatBody $h={s.h}>
                      <Tile>{s.icon}</Tile>
                      <Pairs $col={s.col}>
                        {s.rows.map(([k, v]) => <React.Fragment key={k}><dt>{k}</dt><dd>{v}</dd></React.Fragment>)}
                      </Pairs>
                      {s.state && <State>{s.state}</State>}
                    </StatBody>
                    <StatFoot>{s.foot}</StatFoot>
                  </StatCard>
                ))}
              </Cards>
              <Tabs>
                <Tab $active><BsGlobeAmericas size={16} /></Tab>
                <Tab>침입차단</Tab>
                <Tab>바이러스</Tab>
                <Tab>방화벽</Tab>
                <Tab>보고서</Tab>
                <SolidButton $bg="#333" $w={140} $mr={10}><AiOutlineSetting size={16} stroke="currentColor" strokeWidth={30} />보안 정책 설정</SolidButton>
              </Tabs>
              <Panel>
                <PanelTitle $h={47} $line>공격자 위치</PanelTitle>
                <MapShadow>
                  <MapFrame>
                    <WorldMap />
                    <Zoom>
                      <span><svg width="12" height="12"><path d="M6 0v12M0 6h12" stroke="#000" strokeWidth="1.900" /></svg></span>
                      <span><svg width="12" height="12"><path d="M0 6h12" stroke="#000" strokeWidth="1.900" /></svg></span>
                    </Zoom>
                    <Marker />
                    <Credit>
                      <svg width="13" height="8"><path d="M0 0h13v4H0z" fill="#4c7be1" /><path d="M0 4h13v4H0z" fill="#ffd500" /></svg>
                      <a>Leaflet</a> | © OpenStreetMap contributors, © CartoDB
                    </Credit>
                  </MapFrame>
                </MapShadow>
              </Panel>
              <Lower>
                <Panel $w={740}>
                  <PanelTitle $h={47} $line><GraphIcon />공격 현황</PanelTitle>
                  <AttackChart />
                </Panel>
                <Panel $w={360}>
                  <PanelTitle $h={41}><MdSecurity size={22} color="#ef4444" />요약</PanelTitle>
                  <SummaryCard title="침입시도" chip={<Chip $bg="#fee2e2" $fg="#ef4444"><MdWarning size={14} /></Chip>} values={["0", "45", "42"]} date="09. 16." />
                  <SummaryCard title="바이러스" chip={<Chip $bg="#fef3c7" $fg="#f59e0b"><MdBugReport size={14} /></Chip>} values={["0", "0", "0"]} date="-" />
                </Panel>
              </Lower>
            </Scroll>
            <Bar><Arrow /><Thumb /><Arrow $down /></Bar>
          </Main>
        </Right>
      </Shell>
    </>
  );
}
